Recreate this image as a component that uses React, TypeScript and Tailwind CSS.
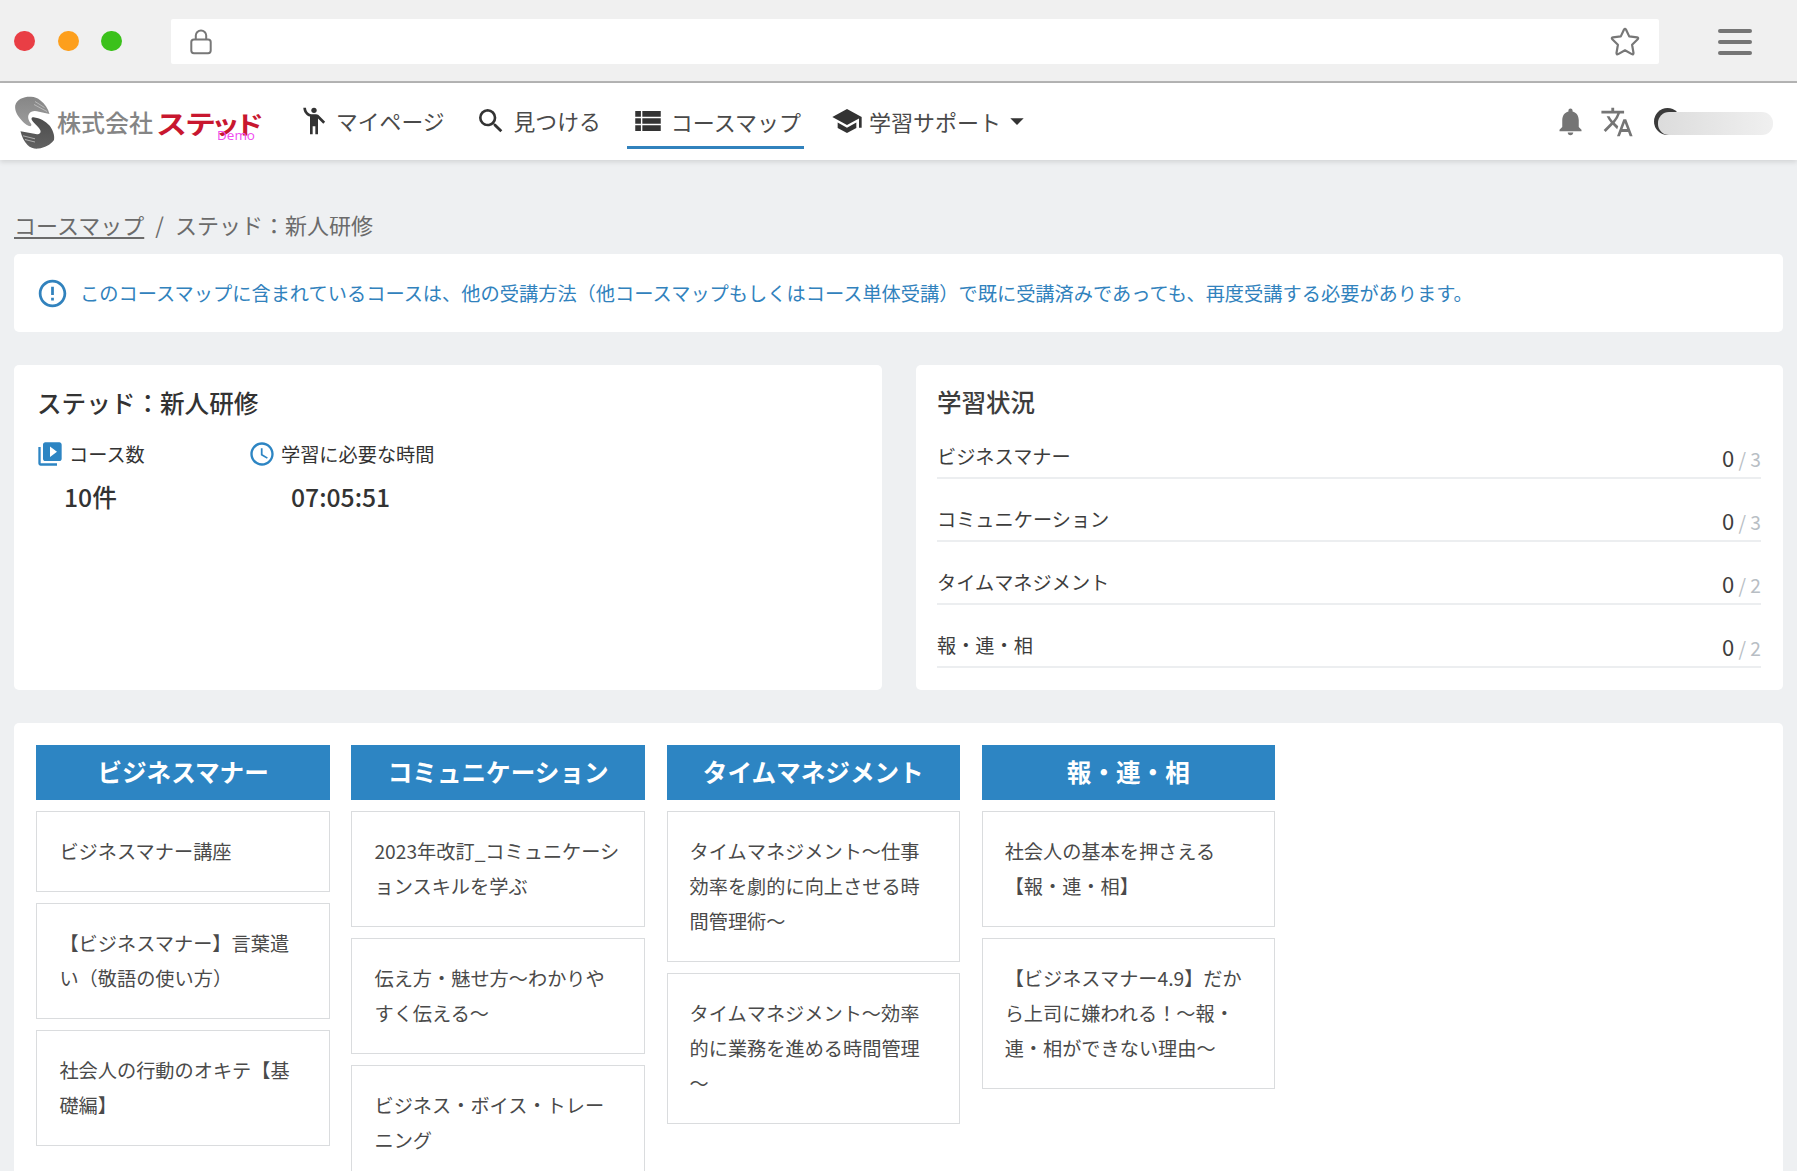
import React from 'react'
import {
  MdAccessTime,
  MdArrowDropDown,
  MdEmojiPeople,
  MdErrorOutline,
  MdNotifications,
  MdSchool,
  MdSearch,
  MdTranslate,
  MdVideoLibrary,
  MdViewList,
} from 'react-icons/md'

interface Category {
  name: string;
  total: number;
  courses: string[];
}

const categories: Category[] = [
  {
    name: 'ビジネスマナー',
    total: 3,
    courses: [
      'ビジネスマナー講座',
      '【ビジネスマナー】言葉遣\nい（敬語の使い方）',
      '社会人の行動のオキテ【基\n礎編】',
    ],
  },
  {
    name: 'コミュニケーション',
    total: 3,
    courses: [
      '2023年改訂_コミュニケーシ\nョンスキルを学ぶ',
      '伝え方・魅せ方～わかりや\nすく伝える～',
      'ビジネス・ボイス・トレー\nニング',
    ],
  },
  {
    name: 'タイムマネジメント',
    total: 2,
    courses: [
      'タイムマネジメント～仕事\n効率を劇的に向上させる時\n間管理術～',
      'タイムマネジメント～効率\n的に業務を進める時間管理\n～',
    ],
  },
  {
    name: '報・連・相',
    total: 2,
    courses: [
      '社会人の基本を押さえる\n【報・連・相】',
      '【ビジネスマナー4.9】だか\nら上司に嫌われる！～報・\n連・相ができない理由～',
    ],
  },
]

function BrowserBar() {
  return (
    <div className="flex h-[83px] shrink-0 items-start border-b-2 border-[#b5b5b5] bg-[#f0f0f0]">
      <div className="ml-[14px] mt-[31px] flex gap-[22.5px]">
        <span className="h-5 w-[21px] rounded-full bg-[#e93e45]" />
        <span className="h-5 w-[21px] rounded-full bg-[#fd9f1d]" />
        <span className="h-5 w-[21px] rounded-full bg-[#3bc11b]" />
      </div>
      <div className="ml-[49px] mt-[19px] flex h-[45px] w-[1488px] justify-between rounded-[2px] bg-white">
        <svg className="ml-[18px] mt-[10px] h-[26px] w-6" viewBox="0 0 24 26" fill="none" stroke="#777" strokeWidth="2">
          <rect x="2.3" y="10.5" width="19.4" height="13.7" rx="2.6" />
          <path d="M6.8 10.5V6.600a5.200 5.200 0 0 1 10.400 0v3.900" />
        </svg>
        <svg className="mr-[19px] mt-[8px] h-[30px] w-[30px]" viewBox="0 0 30 30" fill="none" stroke="#777" strokeWidth="2.2" strokeLinejoin="round">
          <path d="M13.9 2.8q1.1-1.8 2.2 0l3.1 6.6 7.9 1q1.8.5.6 1.9l-5.6 5.5 1.4 8.2q0 1.9-1.7 1.1L15 23.300l-6.800 3.800q-1.700.8-1.700-1.100l1.400-8.200-5.600-5.500q-1.200-1.400.6-1.900l7.900-1z" />
        </svg>
      </div>
      <div className="ml-[59px] mt-[29px] flex flex-col gap-[7px]">
        <span className="h-1 w-[34px] rounded-full bg-[#757575]" />
        <span className="h-1 w-[34px] rounded-full bg-[#757575]" />
        <span className="h-1 w-[34px] rounded-full bg-[#757575]" />
      </div>
    </div>
  )
}

function Logo() {
  return (
    <div className="relative flex w-[250px] shrink-0 items-center pl-[14px]">
      <svg className="mt-[2px] h-[54px] w-[42px] shrink-0" viewBox="0 0 42 54">
        <defs>
          <linearGradient id="hand-top" x1="0" y1="0" x2="0" y2="1">
            <stop offset="0" stopColor="#868686" />
            <stop offset="1" stopColor="#9c9c9c" />
          </linearGradient>
          <linearGradient id="hand-bottom" x1="0" y1="0" x2="0" y2="1">
            <stop offset="0" stopColor="#4c4c4c" />
            <stop offset="1" stopColor="#626262" />
          </linearGradient>
        </defs>
        <path d="M17 .8C10 .5 3 3 1.200 9.500c-.6 5 2 10 5.300 13.500 2 2.500 5 5.500 8.500 7 2 .6 2.800-.5 2.200-2C15 25 13 21.500 15 18c2-3.200 6-3.400 10-2.200l10.500 2.200C34 12.500 31 8 26.500 4.500 23.500 2 20.500 1 17 .8z" fill="url(#hand-top)" />
        <path d="M19.500 21.200c-2-.4-2.500 1.300-1.500 3 2 3 7 6.800 8.300 10 .9 2.400-.5 4-3.300 4L6.500 35.200c1.200 5.300 3.500 9.800 7 13.800 3 3 7 4 11 3.600 6-.8 12-3.600 15.500-8.600 1-5-1.500-10.500-4.500-14.500-4-4.500-9.500-7.500-16-8.300z" fill="url(#hand-bottom)" />
        <path d="M21 5.500l9.500 6M20 8.500l13 7M9 39.800l12 3M11 43.500l10 2.500" stroke="#c4c4c4" strokeWidth=".8" fill="none" />
      </svg>
      <span className="ml-px whitespace-nowrap text-[24px] font-medium leading-[30px] text-[#858585]">株式会社</span>
      <span className="ml-[3px] mt-[3px] flex origin-center scale-y-[0.86] items-center whitespace-nowrap text-[31px] font-bold leading-[30px] tracking-[-2px] text-[#c8172f]">
        ステ
        <span className="-ml-[3px] text-[29px] tracking-[-5px]">ッド</span>
      </span>
      <span className="absolute left-[217px] top-[45px] font-['Open_Sans'] text-[13.5px] leading-[15px] text-[#f04df0]">Demo</span>
    </div>
  )
}

function Header() {
  return (
    <header className="flex h-[77px] shrink-0 bg-white text-[22px] text-[#4a4a4a] shadow-[0_2px_5px_rgba(0,0,0,0.12)]">
      <Logo />
      <nav className="-mt-[2px] flex items-center whitespace-nowrap leading-[32px]">
        <a className="ml-[48px] flex text-[21.8px]">
          <MdEmojiPeople size={32} color="#333" />
          <span className="ml-[6px]">マイページ</span>
        </a>
        <a className="ml-[30px] flex text-[21.8px]">
          <MdSearch size={32} color="#333" />
          <span className="ml-[7px]">見つける</span>
        </a>
        <a className="ml-[26px] mt-[3px] flex h-[53px] items-center border-b-[3px] border-[#3182bd] pl-1 pr-[3px]">
          <MdViewList size={34} color="#333" />
          <span className="ml-[6px]">コースマップ</span>
        </a>
        <a className="ml-[27px] flex">
          <MdSchool size={32} color="#333" />
          <span className="ml-[6px]">学習サポート</span>
          <MdArrowDropDown size={32} color="#333" />
        </a>
      </nav>
      <div className="ml-auto mr-[23px] flex items-center">
        <MdNotifications size={33} color="#757575" />
        <MdTranslate size={34} color="#757575" className="ml-[13px]" />
        <div className="relative ml-5 h-7 w-[120px]">
          <span className="absolute left-0 top-0 h-[27px] w-[27px] rounded-full bg-[#3a3a3a]" />
          <span className="absolute left-1 top-1 h-[23px] w-[115px] rounded-[11px] bg-linear-to-r from-[#dcdcdc] to-[#f0f0f0]" />
        </div>
      </div>
    </header>
  )
}

function Summary() {
  return (
    <section className="h-[325px] w-[868px] rounded-[5px] bg-white pl-[24px] pt-[19px] text-[#333]">
      <h1 className="-ml-px text-[24.6px] font-medium leading-[36px]">ステッド：新人研修</h1>
      <div className="mt-[19px] flex">
        <div className="w-[210px]">
          <div className="flex h-[30px] items-center text-[19.2px]">
            <MdVideoLibrary size={28} color="#2d85c3" className="-ml-[2px]" />
            <span className="ml-[5px]">コース数</span>
          </div>
          <p className="ml-[26px] mt-[9px] text-[24.7px] font-medium leading-[36px]">10件</p>
        </div>
        <div>
          <div className="flex h-[30px] items-center text-[19.2px]">
            <MdAccessTime size={28} color="#2d85c3" />
            <span className="ml-[5px]">学習に必要な時間</span>
          </div>
          <p className="ml-[43px] mt-[9px] text-[24.7px] font-medium leading-[36px]">07:05:51</p>
        </div>
      </div>
    </section>
  )
}

function Progress() {
  return (
    <section className="h-[325px] w-[867px] rounded-[5px] bg-white pl-[21px] pr-[22px] pt-[19px] text-[#3d3d3d]">
      <h2 className="text-[24.5px] font-medium leading-[36px]">学習状況</h2>
      <ul className="mt-[20.5px]">
        {categories.map((c) => (
          <li key={c.name} className="mb-[25.2px] flex h-[38px] justify-between border-b-2 border-[#eceef0] text-[19.2px] leading-[30px]">
            <span>{c.name}</span>
            <span className="pt-px">
              <span className="text-[22px]">0</span>
              <span className="text-[#b8bec4]"> / {c.total}</span>
            </span>
          </li>
        ))}
      </ul>
    </section>
  )
}

function CourseColumn({ category }: { category: Category }) {
  return (
    <div className="flex w-[293.4px] flex-col gap-[11.3px]">
      <h3 className="h-[55px] bg-[#2d85c3] text-center text-[24.6px] font-bold leading-[52px] text-white">
        {category.name}
      </h3>
      {category.courses.map((course) => (
        <div key={course} className="whitespace-pre border border-[#dadcde] px-[22px] py-[22px] text-[19.2px] leading-[34.85px] text-[#4a4a4a]">
          {course}
        </div>
      ))}
    </div>
  )
}

export default function App() {
  return (
    <div className="flex h-[1171px] w-[1797px] flex-col overflow-hidden bg-[#eef0f2] font-['Noto_Sans_CJK_JP',sans-serif]">
      <BrowserBar />
      <Header />
      <main className="px-[14px] pt-[48px]">
        <div className="flex text-[22px] leading-[32px] text-[#6b6b6b]">
          <a className="underline underline-offset-[3px]">コースマップ</a>
          <span className="mx-[11px]">/</span>
          <span>ステッド：新人研修</span>
        </div>
        <div className="mt-[14px] flex h-[78px] items-center rounded-[5px] bg-white text-[19.23px] text-[#3182bd]">
          <MdErrorOutline size={33} color="#3182bd" className="ml-[22px]" />
          <span className="ml-[11px] whitespace-nowrap">
            このコースマップに含まれているコースは、他の受講方法（他コースマップもしくはコース単体受講）で既に受講済みであっても、再度受講する必要があります。
          </span>
        </div>
        <div className="mt-[33px] flex justify-between">
          <Summary />
          <Progress />
        </div>
        <section className="mt-[33px] flex h-[460px] gap-[21.7px] rounded-t-[5px] bg-white pl-[22.4px] pt-[22px]">
          {categories.map((c) => (
            <CourseColumn key={c.name} category={c} />
          ))}
        </section>
      </main>
    </div>
  )
}
